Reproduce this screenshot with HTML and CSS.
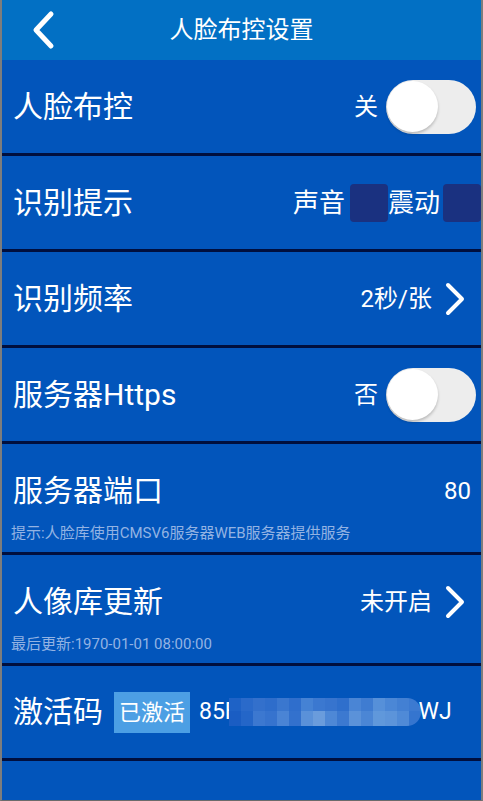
FILE: index.html
```html
<!DOCTYPE html>
<html lang="zh-CN">
<head>
<meta charset="utf-8">
<title>人脸布控设置</title>
<link rel="stylesheet" href="styles.css">
</head>
<body>
<div class="screen">
  <header class="topbar">
    <svg class="back" viewBox="0 0 26 40" width="26" height="40"><path d="M21 4 L6 20 L21 36" fill="none" stroke="#fff" stroke-width="5" stroke-linecap="round" stroke-linejoin="round"/></svg>
    <h1 class="title">人脸布控设置</h1>
    <span></span>
  </header>

  <div class="row">
    <span class="label">人脸布控</span>
    <div class="right">
      <span class="value">关</span>
      <span class="switch"><span class="knob"></span></span>
    </div>
  </div>

  <div class="row">
    <span class="label">识别提示</span>
    <div class="right checks">
      <span class="cklabel">声音</span><span class="cb"></span>
      <span class="cklabel">震动</span><span class="cb cb-last"></span>
    </div>
  </div>

  <div class="row">
    <span class="label">识别频率</span>
    <div class="right">
      <span class="value">2秒/张</span>
      <svg class="chev" viewBox="0 0 22 34" width="22" height="34"><path d="M4 3 L18 17 L4 31" fill="none" stroke="#fff" stroke-width="4" stroke-linecap="round" stroke-linejoin="round"/></svg>
    </div>
  </div>

  <div class="row">
    <span class="label">服务器Https</span>
    <div class="right">
      <span class="value">否</span>
      <span class="switch"><span class="knob"></span></span>
    </div>
  </div>

  <div class="row row-hint">
    <div class="line">
      <span class="label">服务器端口</span>
      <span class="value value-num">80</span>
    </div>
    <p class="hint">提示:人脸库使用CMSV6服务器WEB服务器提供服务</p>
  </div>

  <div class="row row-hint">
    <div class="line">
      <span class="label">人像库更新</span>
      <div class="right">
        <span class="value">未开启</span>
        <svg class="chev" viewBox="0 0 22 34" width="22" height="34"><path d="M4 3 L18 17 L4 31" fill="none" stroke="#fff" stroke-width="4" stroke-linecap="round" stroke-linejoin="round"/></svg>
      </div>
    </div>
    <p class="hint">最后更新:1970-01-01 08:00:00</p>
  </div>

  <div class="row row-last">
    <span class="label">激活码</span>
    <span class="badge">已激活</span>
    <span class="code">85F<svg class="mosaic" viewBox="0 0 192 28" width="192" height="28">
      <defs><clipPath id="mc"><path d="M0 0 H178 A14 14 0 0 1 178 28 H0 Z"/></clipPath></defs>
      <g clip-path="url(#mc)">
        <rect x="0" y="0" width="12" height="13" fill="#1E62C6"/><rect x="0" y="13" width="12" height="15" fill="#1A5DC3"/>
        <rect x="12" y="0" width="12" height="13" fill="#2A6ACA"/><rect x="12" y="13" width="12" height="15" fill="#2466C8"/>
        <rect x="24" y="0" width="12" height="13" fill="#3370CC"/><rect x="24" y="13" width="12" height="15" fill="#3C78D0"/>
        <rect x="36" y="0" width="12" height="13" fill="#2E6DCB"/><rect x="36" y="13" width="12" height="15" fill="#3673CE"/>
        <rect x="48" y="0" width="12" height="13" fill="#3A77CF"/><rect x="48" y="13" width="12" height="15" fill="#4A84D5"/>
        <rect x="60" y="0" width="12" height="13" fill="#2F6ECC"/><rect x="60" y="13" width="12" height="15" fill="#3371CD"/>
        <rect x="72" y="0" width="12" height="13" fill="#4582D4"/><rect x="72" y="13" width="12" height="15" fill="#5A91D9"/>
        <rect x="84" y="0" width="12" height="13" fill="#3B78D0"/><rect x="84" y="13" width="12" height="15" fill="#6A9CDC"/>
        <rect x="96" y="0" width="12" height="13" fill="#3774CE"/><rect x="96" y="13" width="12" height="15" fill="#4E88D6"/>
        <rect x="108" y="0" width="12" height="13" fill="#2F6FCC"/><rect x="108" y="13" width="12" height="15" fill="#3C79D0"/>
        <rect x="120" y="0" width="12" height="13" fill="#4A85D5"/><rect x="120" y="13" width="12" height="15" fill="#5B92D9"/>
        <rect x="132" y="0" width="12" height="13" fill="#3F7CD1"/><rect x="132" y="13" width="12" height="15" fill="#4B86D5"/>
        <rect x="144" y="0" width="12" height="13" fill="#5690D9"/><rect x="144" y="13" width="12" height="15" fill="#6098DB"/>
        <rect x="156" y="0" width="12" height="13" fill="#4B87D6"/><rect x="156" y="13" width="12" height="15" fill="#5C94DA"/>
        <rect x="168" y="0" width="12" height="13" fill="#4380D3"/><rect x="168" y="13" width="12" height="15" fill="#4F8AD7"/>
        <rect x="180" y="0" width="12" height="13" fill="#3C7AD1"/><rect x="180" y="13" width="12" height="15" fill="#3575CF"/>
      </g>
    </svg>WJ</span>
  </div>

  <div class="filler"></div>
</div>
</body>
</html>
```

FILE: styles.css
```css
* {
  box-sizing: border-box;
  margin: 0;
  padding: 0;
}

html, body {
  width: 483px;
  height: 801px;
  overflow: hidden;
  background: #0255BB;
}

body {
  font-family: Roboto, "Noto Sans CJK SC", sans-serif;
  color: #ffffff;
}

.screen {
  width: 483px;
  height: 801px;
  border-left: 2px solid #7d7d7d;
  border-right: 2px solid #7d7d7d;
  border-bottom: 1px solid #6b6b6b;
  background: #0255BB;
  display: flex;
  flex-direction: column;
  overflow: hidden;
}

.topbar {
  height: 60px;
  flex: 0 0 60px;
  background: #0270C4;
  display: grid;
  grid-template-columns: 80px 1fr 80px;
  align-items: center;
}

.back {
  display: block;
  margin-left: 28px;
}

.title {
  font-size: 24px;
  font-weight: 400;
  text-align: center;
  line-height: 60px;
}

.row {
  height: 96px;
  flex: 0 0 auto;
  border-bottom: 3px solid #000F3E;
  display: flex;
  align-items: center;
  padding-left: 8px;
}

.label {
  font-size: 30px;
  line-height: 40px;
  margin-left: 3px;
  white-space: nowrap;
}

.right {
  margin-left: auto;
  display: flex;
  align-items: center;
}

.value {
  font-size: 24px;
  line-height: 30px;
  white-space: nowrap;
}

.value-num {
  margin-left: auto;
  margin-right: 10px;
}

.switch {
  width: 90px;
  height: 54px;
  border-radius: 27px;
  background: #EDEDED;
  display: flex;
  align-items: center;
  padding-left: 1px;
  margin-left: 8px;
  margin-right: 5px;
}

.knob {
  width: 51px;
  height: 51px;
  border-radius: 50%;
  background: #ffffff;
  box-shadow: 0 2px 3px rgba(0, 0, 0, 0.22);
}

.checks .cklabel {
  font-size: 26px;
  line-height: 34px;
}

.cb {
  width: 38px;
  height: 38px;
  border-radius: 4px;
  background: #1A3180;
  margin-left: 5px;
}

.cb-last {
  margin-left: 3px;
}

.chev {
  display: block;
  margin-left: 12px;
  margin-right: 15px;
}

.row-hint {
  height: 111px;
  flex-direction: column;
  align-items: stretch;
  justify-content: flex-start;
  padding-top: 24px;
}

.line {
  display: flex;
  align-items: center;
  height: 46px;
}

.hint {
  font-size: 15px;
  line-height: 18px;
  margin-top: 10px;
  margin-left: 1px;
  color: #93B3E3;
  white-space: nowrap;
}

.row-last {
  height: 95px;
}

.badge {
  font-size: 22px;
  line-height: 41px;
  height: 41px;
  padding: 0 5px;
  background: #4C9FE4;
  margin-left: 11px;
  white-space: nowrap;
}

.code {
  display: flex;
  align-items: center;
  font-size: 23px;
  line-height: 30px;
  margin-left: 9px;
  white-space: nowrap;
}

.mosaic {
  display: block;
  margin-left: -9px;
  margin-right: -2px;
}

.filler {
  flex: 1 1 auto;
}
```
